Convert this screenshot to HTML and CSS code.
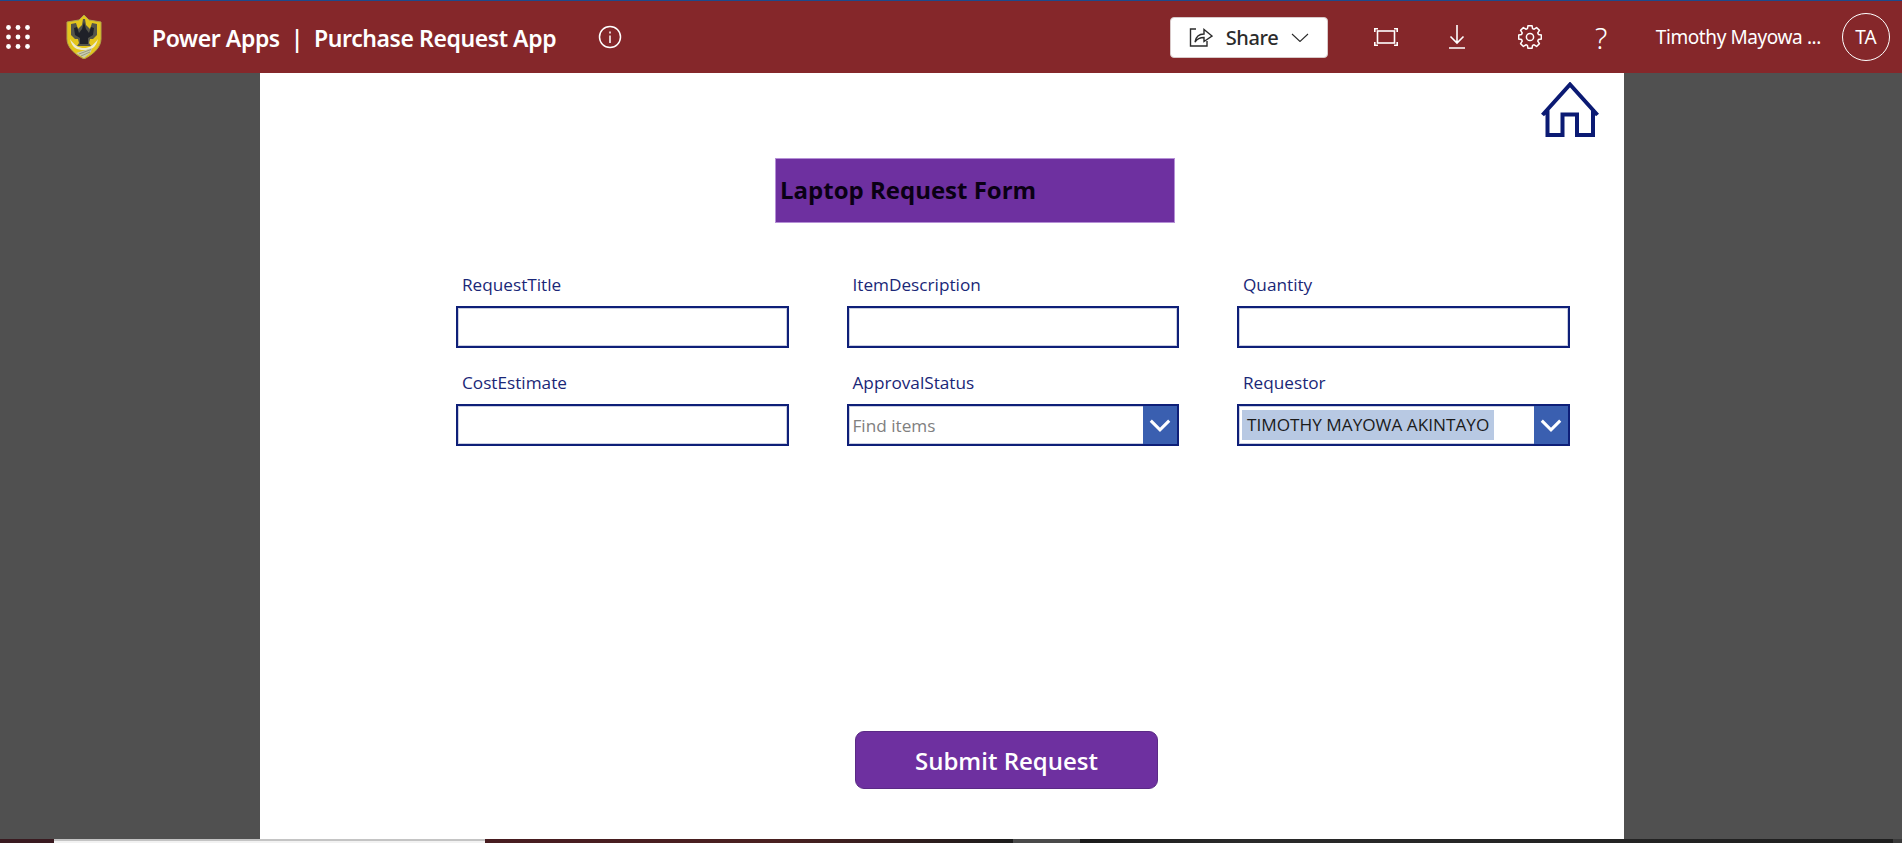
FILE: index.html
```html
<!DOCTYPE html>
<html lang="en">
<head>
<meta charset="utf-8">
<title>Power Apps | Purchase Request App</title>
<link rel="stylesheet" href="styles.css">
</head>
<body>
<header class="topbar">
  <div class="topbar-left">
    <svg class="waffle" viewBox="0 0 24 24" width="24" height="24" fill="#fff"><circle cx="2.5" cy="2.5" r="2.4"/><circle cx="12" cy="2.5" r="2.4"/><circle cx="21.5" cy="2.5" r="2.4"/><circle cx="2.5" cy="12" r="2.4"/><circle cx="12" cy="12" r="2.4"/><circle cx="21.5" cy="12" r="2.4"/><circle cx="2.5" cy="21.5" r="2.4"/><circle cx="12" cy="21.5" r="2.4"/><circle cx="21.5" cy="21.5" r="2.4"/></svg>
    <svg class="logo" viewBox="0 0 36 44" width="36" height="44">
      <path d="M18 0 L23 5 L35 7 L35 24 C35 33 26 40 18 44 C10 40 1 33 1 24 L1 7 L13 5 Z" fill="#e4c61c" stroke="#b0a54a" stroke-width="1"/>
      <path d="M17 4 L19 4 L20 10 L24 14 L26 8 L31 9 L31 20 L27 24 L24 24 L23 28 L25 31 L11 31 L13 28 L12 24 L9 24 L5 20 L5 9 L10 8 L12 14 L16 10 Z" fill="#55554a"/>
      <path d="M18 7 L20 14 L23 18 L25 12 L28 13 L27 20 L22 23 L22 29 L14 29 L14 23 L9 20 L8 13 L11 12 L13 18 L16 14 Z" fill="#1f2128"/>
      <path d="M4 24 C9 31 13 33 18 33 C23 33 27 31 32 24 C30 33 25 35 18 35 C11 35 6 33 4 24 Z" fill="#ecebd2"/>
      <path d="M10 38 L26 33 L25 37 L18 43 Z" fill="#c9cbb0"/>
      <path d="M13 39 L25 34.5M15 41 L24 37" stroke="#8d8f6a" stroke-width="0.8"/>
    </svg>
    <div class="app-title"><span>Power Apps</span><span class="sep">|</span><span>Purchase Request App</span></div>
    <svg class="info" viewBox="0 0 24 24" width="24" height="24" fill="none" stroke="#fff" stroke-width="1.5"><circle cx="12" cy="12" r="10.5"/><path d="M12 10.5V18M12 6.5V8.4"/></svg>
  </div>
  <div class="topbar-right">
    <button class="share" type="button">
      <svg viewBox="0 0 24 20" width="24" height="20" fill="none" stroke="#2b2b2b" stroke-width="1.4"><path d="M7 2H1.5V19H18V14"/><path d="M6 15C7 9 10 7 15 7V2.5L23 9L15 14.5V10.5C11 10.5 8 12 6 15Z"/></svg>
      <span>Share</span>
      <svg viewBox="0 0 18 9" width="18" height="9" fill="none" stroke="#2b2b2b" stroke-width="1.1"><path d="M1 1L9 8.5L17 1"/></svg>
    </button>
    <svg class="tool tool-focus" viewBox="0 0 24 18" width="24" height="18" fill="none" stroke="#fff" stroke-width="1.6"><rect x="3.5" y="3" width="17" height="12"/><path d="M0.8 4V0.8H4M20 0.8H23.2V4M23.2 14V17.2H20M4 17.2H0.8V14"/></svg>
    <svg class="tool tool-down" viewBox="0 0 16 24" width="16" height="24" fill="none" stroke="#fff" stroke-width="1.6"><path d="M8 0V18M1.5 11.5L8 18L14.5 11.5M0 23H16"/></svg>
    <svg class="tool tool-gear" viewBox="0 0 24 24" width="24" height="24" fill="none" stroke="#fff" stroke-width="1.5"><circle cx="12" cy="12" r="3.6"/><path d="M9.43 3.58L10 .67H14L14.57 3.58L16.14 4.23L18.6 2.57L21.43 5.4L19.77 7.86L20.42 9.43L23.33 10V14L20.42 14.57L19.77 16.14L21.43 18.6L18.6 21.43L16.14 19.77L14.57 20.42L14 23.33H10L9.43 20.42L7.86 19.77L5.4 21.43L2.57 18.6L4.23 16.14L3.58 14.57L.67 14V10L3.58 9.43L4.23 7.86L2.57 5.4L5.4 2.57L7.86 4.23Z" stroke-linejoin="round"/></svg>
    <span class="tool tool-help">?</span>
    <span class="user-name">Timothy Mayowa ...</span>
    <span class="avatar">TA</span>
  </div>
</header>

<main class="stage">
  <section class="canvas">
    <div class="home-row">
      <svg viewBox="0 0 58 55" width="58" height="55" fill="none" stroke="#0b1a73" stroke-width="4"><path d="M1.5 33L29 2.5L56.5 33M6.5 27V53H21.5V32.5H36V53H52V27"/></svg>
    </div>
    <h1 class="form-title">Laptop Request Form</h1>
    <form class="form-grid">
      <div class="field"><label class="field-label">RequestTitle</label><input class="box" type="text"></div>
      <div class="field"><label class="field-label">ItemDescription</label><input class="box" type="text"></div>
      <div class="field"><label class="field-label">Quantity</label><input class="box" type="text"></div>
      <div class="field"><label class="field-label">CostEstimate</label><input class="box" type="text"></div>
      <div class="field"><label class="field-label">ApprovalStatus</label>
        <div class="box combo"><span class="placeholder">Find items</span>
          <span class="combo-btn"><svg viewBox="0 0 20 12" width="22" height="13" fill="none" stroke="#fff" stroke-width="2.8"><path d="M1.5 1.5L10 10L18.5 1.5"/></svg></span></div></div>
      <div class="field"><label class="field-label">Requestor</label>
        <div class="box combo"><span class="chip">TIMOTHY MAYOWA AKINTAYO</span>
          <span class="combo-btn"><svg viewBox="0 0 20 12" width="22" height="13" fill="none" stroke="#fff" stroke-width="2.8"><path d="M1.5 1.5L10 10L18.5 1.5"/></svg></span></div></div>
    </form>
    <button class="submit" type="button">Submit Request</button>
  </section>
</main>

<footer class="strip">
  <div class="strip-a"></div>
  <div class="strip-b"></div>
  <div class="strip-c"></div>
  <div class="strip-d"></div>
  <div class="strip-e"></div>
  <div class="strip-f"></div>
</footer>
</body>
</html>
```
FILE: styles.css
```css
* { box-sizing: border-box; }
html, body { margin: 0; padding: 0; height: 100%; overflow: hidden; }
body {
  display: flex;
  flex-direction: column;
  width: 1902px;
  height: 843px;
  background: #505050;
  font-family: "Open Sans", "Liberation Sans", sans-serif;
}

.topbar {
  flex: 0 0 73px;
  display: flex;
  align-items: center;
  justify-content: space-between;
  background: #85272a;
  border-top: 1px solid #1c4a8c;
  color: #fff;
  font-family: "Noto Sans", "Open Sans", sans-serif;
}
.topbar-left { display: flex; align-items: center; padding-left: 6px; }
.waffle { flex: none; width: 24px; height: 24px; }
.logo { flex: none; margin-left: 36px; }
.app-title {
  margin-left: 50px;
  padding-top: 1px;
  display: flex;
  gap: 11px;
  font-size: 23px;
  font-weight: 600;
  letter-spacing: -0.42px;
  white-space: nowrap;
}
.info { flex: none; margin-left: 42px; }
.topbar-right { display: flex; align-items: center; padding-right: 12px; }

.share {
  width: 158px;
  height: 41px;
  display: flex;
  align-items: center;
  gap: 13px;
  padding: 0 0 0 18px;
  background: #fff;
  border: 1px solid #d8c9c9;
  border-radius: 4px;
  color: #2b2b2b;
  font: 500 20px "Noto Sans", sans-serif;
  letter-spacing: -0.4px;
}
.tool { flex: none; }
.tool-focus { margin-left: 46px; }
.tool-down { margin-left: 51px; }
.tool-gear { margin-left: 53px; }
.tool-help {
  margin-left: 51px;
  width: 17px;
  font-size: 29px;
  font-weight: 300;
  line-height: 1;
  text-align: center;
}
.user-name {
  margin-left: 46px;
  font-size: 19px;
  letter-spacing: -0.4px;
  white-space: nowrap;
}
.avatar {
  margin-left: 21px;
  width: 48px;
  height: 48px;
  display: flex;
  align-items: center;
  justify-content: center;
  border: 1px solid #fff;
  border-radius: 50%;
  font-size: 19px;
}

.stage { flex: 1; display: flex; min-height: 0; padding-left: 260px; }
.canvas {
  width: 1364px;
  display: flex;
  flex-direction: column;
  align-items: flex-start;
  background: #fff;
}
.home-row {
  align-self: stretch;
  display: flex;
  justify-content: flex-end;
  padding: 9px 25px 0 0;
}
.home-row svg { display: block; }

.form-title {
  width: 400px;
  height: 65px;
  margin: 21px 0 0 515px;
  padding: 0 0 2px 4px;
  display: flex;
  align-items: center;
  background: #6e30a0;
  border: 1px solid #b58fd6;
  color: #0a0014;
  font-size: 24px;
  font-weight: 700;
}

.form-grid {
  display: grid;
  grid-template-columns: repeat(3, 332.5px);
  column-gap: 58px;
  row-gap: 23px;
  margin: 50px 0 0 196px;
}
.field { display: flex; flex-direction: column; }
.field-label {
  height: 33px;
  padding-left: 6px;
  font-size: 17.2px;
  line-height: 24px;
  color: #1a2777;
}
.box {
  display: block;
  width: 100%;
  height: 42px;
  margin: 0;
  padding: 0;
  background: #fff;
  border: 2px solid #0e1f78;
  border-radius: 0;
  box-shadow: inset 0 0 0 1px rgba(14, 31, 120, 0.22);
}
.combo { display: flex; align-items: center; }
.placeholder { padding-left: 4px; font-size: 17.2px; color: #808080; }
.chip {
  margin-left: 3px;
  padding: 0 5px;
  height: 30px;
  line-height: 30px;
  background: #b8c9e3;
  color: #1b1b1b;
  font-size: 17.2px;
  white-space: nowrap;
}
.combo-btn {
  margin-left: auto;
  width: 34px;
  height: 100%;
  display: flex;
  align-items: center;
  justify-content: center;
  background: #3a5fb0;
}

.submit {
  width: 303px;
  height: 58px;
  margin: 285px 0 0 595px;
  background: #6e30a0;
  border: 1px solid #5a2a85;
  border-radius: 9px;
  color: #fff;
  font: 600 24px "Open Sans", sans-serif;
}

.strip { flex: 0 0 4px; display: flex; }
.strip-a { width: 54px; background: #3a1a20; }
.strip-b { width: 431px; background: linear-gradient(#c4c4c4 0 2px, #f2f2f2 2px); }
.strip-c { width: 528px; background: linear-gradient(90deg, #471c20 0, #4a2020 55%, #1c1c1c 100%); }
.strip-d { width: 67px; background: #4a4a4a; }
.strip-e { width: 813px; background: linear-gradient(90deg, #1a1a1a, #2a2a2a 20%, #1e1e1e); }
.strip-f { width: 9px; background: #3a3a3a; }
```
